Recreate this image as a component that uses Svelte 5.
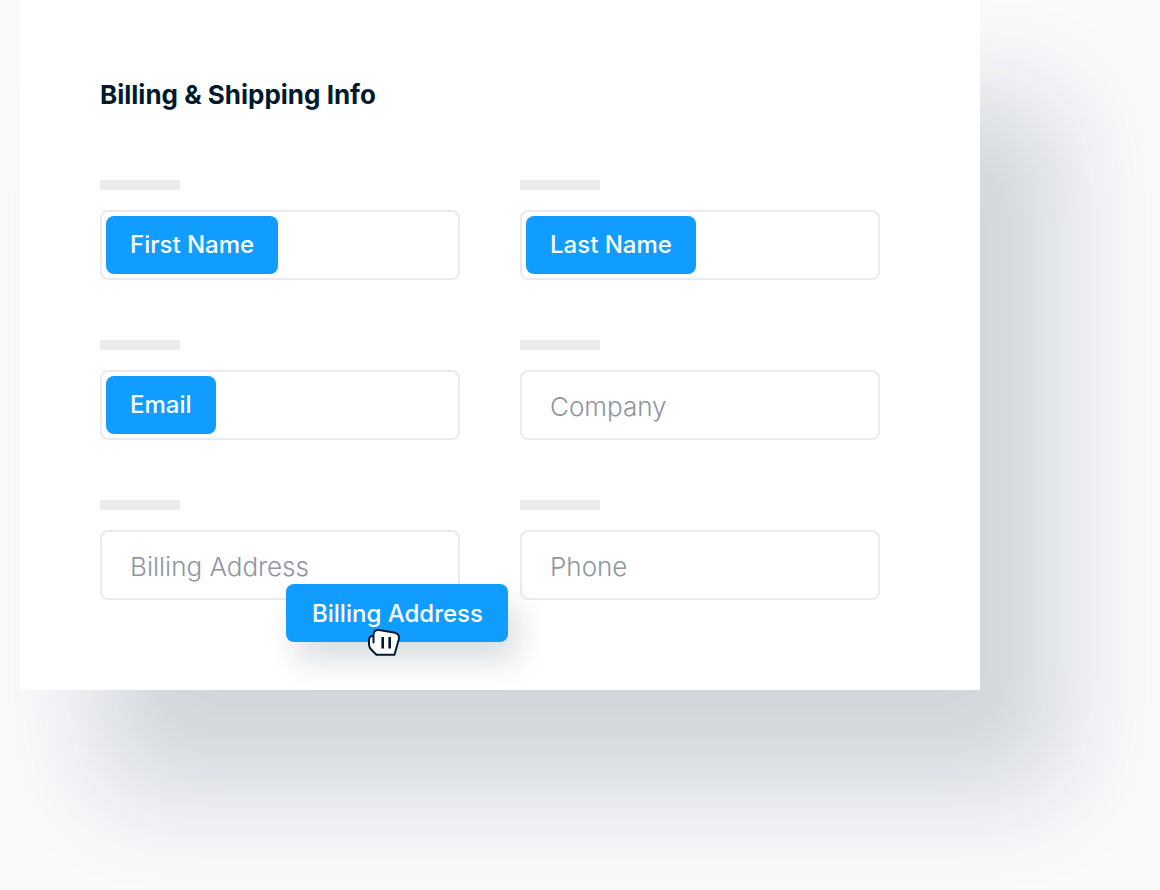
<script lang="ts">
	interface Field {
		id: string;
		label: string;
		filled?: boolean;
		dragging?: boolean;
	}

	const fields: Field[] = [
		{ id: 'first-name', label: 'First Name', filled: true },
		{ id: 'last-name', label: 'Last Name', filled: true },
		{ id: 'email', label: 'Email', filled: true },
		{ id: 'company', label: 'Company' },
		{ id: 'billing-address', label: 'Billing Address', dragging: true },
		{ id: 'phone', label: 'Phone' },
	];
</script>

<main class="page">
	<form class="card">
		<h1 class="title">Billing & Shipping Info</h1>

		<div class="fields">
			{#each fields as field (field.id)}
				<div class="field">
					<label class="field-label" for={field.id} aria-label={field.label}></label>
					{#if field.filled}
						<div class="box">
							<button type="button" class="chip" id={field.id}>{field.label}</button>
						</div>
					{:else}
						<input class="box input" id={field.id} type="text" placeholder={field.label} />
					{/if}

					{#if field.dragging}
						<!-- Chip being carried to its slot -->
						<div class="dragged">
							<button type="button" class="chip lifted">{field.label}</button>
							<svg class="hand" width="34" height="30" viewBox="0 0 34 30" aria-hidden="true">
								<path
									d="M6.5 14.5V7C6.5 3.5 8.5 1.5 12 2L27 4.4C31 5 32.6 7.8 31.8 11.2L27.5 26.7H9.5L4.6 22C2.6 20 2 18.4 2 16.5V12.5C2 9.5 3.6 7.8 6.5 7.8"
									fill="#fff"
									stroke="#001a2e"
									stroke-width="2"
									stroke-linejoin="round"
									stroke-linecap="round"
								/>
								<path d="M15.7 9V20.5M22.7 9V20.5" stroke="#001a2e" stroke-width="2.6" />
							</svg>
						</div>
					{/if}
				</div>
			{/each}
		</div>
	</form>
</main>

<style>
	:global(body) {
		margin: 0;
		background: #f9fafc;
	}

	.page {
		box-sizing: border-box;
		min-height: 100vh;
		padding: 0 180px 200px 20px;
		overflow: hidden;
		font-family: Inter, 'Liberation Sans', sans-serif;
	}

	.card {
		padding: 80px 100px 90px 80px;
		background: #fff;
		box-shadow: 80px 100px 100px rgba(0, 26, 46, 0.16);
	}

	.title {
		margin: 0 0 70px;
		font-size: 26px;
		font-weight: 700;
		line-height: 30px;
		color: #001a2e;
	}

	.fields {
		display: grid;
		grid-template-columns: repeat(2, minmax(0, 1fr));
		gap: 60px;
	}

	.field {
		position: relative;
		display: flex;
		flex-direction: column;
		gap: 20px;
	}

	.field-label {
		width: 80px;
		height: 10px;
		background: #ebecee;
	}

	.box {
		box-sizing: border-box;
		display: flex;
		width: 100%;
		height: 70px;
		padding: 4px;
		background: #fff;
		border: 2px solid #ebebeb;
		border-radius: 8px;
	}

	.input {
		padding: 2px 28px 0;
		font-family: inherit;
		font-size: 26px;
		font-weight: 300;
		color: #001a2e;
		outline: none;
	}

	.input::placeholder {
		color: #8c96a0;
		opacity: 1;
	}

	.chip {
		height: 58px;
		padding: 0 24px 2px;
		background: #119dff;
		border: 0;
		border-radius: 8px;
		font-family: inherit;
		font-size: 24px;
		font-weight: 500;
		color: #fff;
		white-space: nowrap;
		cursor: grab;
	}

	.dragged {
		position: absolute;
		top: 84px;
		left: 186px;
		z-index: 1;
	}

	.lifted {
		padding: 0 25px 0 26px;
		box-shadow: 10px 20px 30px rgba(0, 26, 46, 0.14);
		cursor: grabbing;
	}

	.hand {
		position: absolute;
		top: 44px;
		left: 81px;
		pointer-events: none;
	}
</style>
